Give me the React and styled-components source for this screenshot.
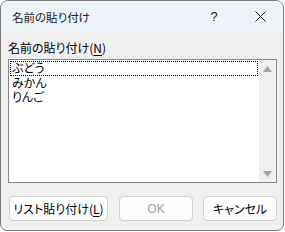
import styled, { createGlobalStyle } from "styled-components";

const GlobalStyle = createGlobalStyle`
  body {
    margin: 0;
    background: #ffffff;
    font-family: "Noto Sans CJK JP", "Noto Sans", sans-serif;
    font-feature-settings: "palt";
  }
`;

const Window = styled.div`
  box-sizing: border-box;
  width: 284px;
  height: 231px;
  border: 1px solid #7a7a7a;
  border-radius: 8px 8px 7px 7px;
  overflow: hidden;
  background: #f0f0f0;
  display: flex;
  flex-direction: column;
`;

const TitleBar = styled.div`
  height: 31px;
  flex-shrink: 0;
  background: #eef2f9;
  display: flex;
  align-items: center;
  padding-left: 11px;
  font-size: 11.5px;
  color: #1a1a1a;
`;

const CaptionButton = styled.div`
  width: 46px;
  height: 31px;
  display: flex;
  align-items: center;
  justify-content: center;
  font-family: "Liberation Sans", sans-serif;
  font-size: 13px;
  color: #1a1a1a;
  margin-left: ${(p) => (p.$first ? "auto" : "0")};
`;

const Body = styled.div`
  padding: 7px 6px 0 7px;
  display: flex;
  flex-direction: column;
`;

const Label = styled.div`
  font-size: 12px;
  height: 18px;
  line-height: 18px;
  color: #000;
  u {
    text-decoration: underline;
    text-underline-offset: 2px;
  }
`;

const ListBox = styled.div`
  margin-top: 2px;
  height: 124px;
  box-sizing: border-box;
  border: 1px solid #828790;
  background: #ffffff;
  display: flex;
`;

const Items = styled.div`
  flex: 1;
  padding: 1px 1px 0 1px;
`;

const Item = styled.div`
  height: 14.5px;
  line-height: 14.5px;
  padding-left: 2px;
  font-size: 12px;
  color: #000;
  box-sizing: border-box;
  outline: ${(p) => (p.$focused ? "1px dotted #000" : "none")};
  outline-offset: -1px;
`;

const ScrollBar = styled.div`
  width: 17px;
  background: #f0f0f0;
  display: flex;
  flex-direction: column;
  justify-content: space-between;
  align-items: center;
  padding: 6px 0 5px;
`;

const Buttons = styled.div`
  display: flex;
  margin-top: 13px;
  padding-left: 1px;
`;

const Button = styled.div`
  box-sizing: border-box;
  width: ${(p) => p.$w}px;
  height: 25px;
  margin-right: ${(p) => p.$gap || 0}px;
  border: 1px solid #d0d0d0;
  border-radius: 4px;
  background: #fdfdfd;
  display: flex;
  align-items: center;
  justify-content: center;
  font-size: 12px;
  color: ${(p) => (p.$disabled ? "#a0a0a0" : "#000")};
  font-family: ${(p) =>
    p.$disabled ? '"Liberation Sans", sans-serif' : "inherit"};
  u {
    text-underline-offset: 2px;
  }
`;

const Arrow = ({ down }) => (
  <svg width="9" height="6" viewBox="0 0 9 6">
    <polygon
      points={down ? "0,0 9,0 4.5,6" : "0,6 9,6 4.5,0"}
      fill="#a3a3a3"
    />
  </svg>
);

export default function App() {
  return (
    <>
      <GlobalStyle />
      <Window>
        <TitleBar>
          名前の貼り付け
          <CaptionButton $first>?</CaptionButton>
          <CaptionButton>
            <svg width="11" height="11" viewBox="0 0 11 11">
              <path d="M0.5 0.5 L10.5 10.5 M10.5 0.5 L0.5 10.5" stroke="#1a1a1a" strokeWidth="1" />
            </svg>
          </CaptionButton>
        </TitleBar>
        <Body>
          <Label>
            名前の貼り付け(<u>N</u>)
          </Label>
          <ListBox>
            <Items>
              <Item $focused>ぶどう</Item>
              <Item>みかん</Item>
              <Item>りんご</Item>
            </Items>
            <ScrollBar>
              <Arrow />
              <Arrow down />
            </ScrollBar>
          </ListBox>
          <Buttons>
            <Button $w={99} $gap={11}>
              リスト貼り付け(<u>L</u>)
            </Button>
            <Button $w={74} $gap={10} $disabled>
              OK
            </Button>
            <Button $w={74}>キャンセル</Button>
          </Buttons>
        </Body>
      </Window>
    </>
  );
}
